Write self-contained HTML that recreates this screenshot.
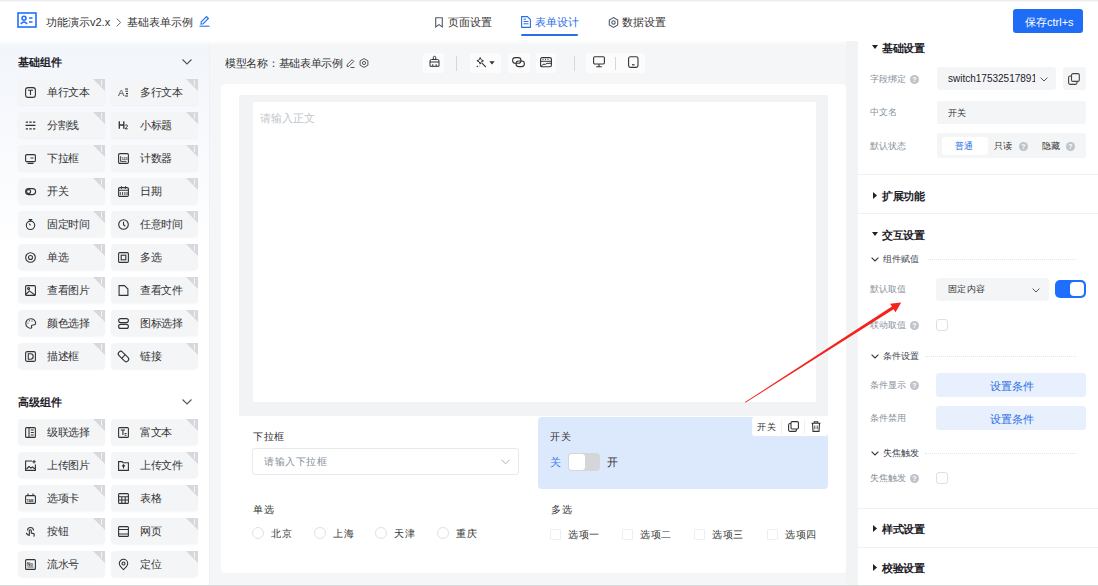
<!DOCTYPE html>
<html><head><meta charset="utf-8">
<style>
*{box-sizing:border-box;margin:0;padding:0}
html,body{width:1098px;height:586px;overflow:hidden;background:#fff;font-family:"Liberation Sans",sans-serif;color:#1d2129}
.a{position:absolute}
.t{position:absolute;white-space:nowrap;line-height:1}
svg{position:absolute;overflow:visible}
/* header */
#top{left:0;top:0;width:1098px;height:2px;background:linear-gradient(#ededed 0,#ededed 50%,#f8f8f8 50%)}
#hdr{left:0;top:2px;width:1098px;height:39px;background:#fff}
/* sidebar */
#side{left:0;top:41px;width:210px;height:545px;background:linear-gradient(180deg,#f2f5fb 0%,#f8fafd 20%,#ffffff 38%,#ffffff 100%)}
#sideline{left:209px;top:41px;width:1px;height:545px;background:#eef0f3}
.it{position:absolute;width:87px;height:26px;border-radius:4px;background:#f4f5f7;box-shadow:0 1px 2px rgba(0,0,0,0.04)}
.it .ic{position:absolute;left:7px;top:8px;width:11px;height:11px}
.it .lb{position:absolute;left:29px;top:8px;font-size:11px;letter-spacing:-0.4px;line-height:11px;color:#333;white-space:nowrap}
.it .cn{position:absolute;right:0;top:0;width:0;height:0;border-top:12px solid #d6d8dc;border-left:12px solid transparent}
.it .cn:after{content:"";position:absolute;left:-4px;top:-11px;width:1px;height:6px;background:#fff;opacity:.7}
.gh{position:absolute;left:18px;margin-top:1px;font-size:11px;font-weight:bold;color:#1d2129;line-height:11px}
/* middle */
#mid{left:210px;top:41px;width:648px;height:545px;background:#f5f6f8}
#card{left:221px;top:84px;width:625px;height:489px;background:#fff;border-radius:4px}
/* right */
#right{left:858px;top:41px;width:240px;height:545px;background:#fff}
.lab{position:absolute;left:870px;font-size:9px;color:#86909c;line-height:11px;white-space:nowrap}
.q{position:absolute;width:9px;height:9px;border-radius:50%;background:#bfc3ca;color:#fff;font-size:7px;line-height:9px;text-align:center;font-weight:bold}
.sh{position:absolute;left:882px;font-size:11px;letter-spacing:-0.5px;font-weight:bold;color:#1d2129;line-height:12px;margin-top:1px;white-space:nowrap}
.tri{position:absolute;width:0;height:0}
.inp{position:absolute;background:#f4f5f7;border-radius:3px}
#bottomline{left:0;top:585px;width:1098px;height:1px;background:#d9d9d9}
</style></head><body>
<div id="top" class="a"></div>
<div id="hdr" class="a"></div>
<div id="side" class="a"></div>
<div id="sideline" class="a"></div>
<div id="mid" class="a"></div>
<div id="card" class="a"></div>
<div id="right" class="a"></div>
<div id="bottomline" class="a"></div>
<div class="a" style="left:0;top:41px;width:1098px;height:4px;background:linear-gradient(rgba(255,255,255,0.85),rgba(255,255,255,0))"></div>

<!-- HEADER CONTENT -->
<svg style="left:17px;top:12px" width="20" height="16" viewBox="0 0 20 16"><rect x="1" y="1" width="18" height="14" fill="none" stroke="#1e6fff" stroke-width="1.6"/><circle cx="7" cy="6.2" r="2" fill="none" stroke="#1e6fff" stroke-width="1.5"/><path d="M3.8 12 Q7 8 10.2 12" fill="none" stroke="#1e6fff" stroke-width="1.5"/><path d="M12 6h3.5M12 10h3.5" stroke="#1e6fff" stroke-width="1.5"/></svg>
<div class="t" style="left:46px;top:17px;font-size:11px;color:#333">功能演示v2.x</div>
<svg style="left:116px;top:18px" width="6" height="9" viewBox="0 0 6 9"><path d="M0.8 0.6l3.8 3.9-3.8 3.9" fill="none" stroke="#666" stroke-width="1"/></svg>
<div class="t" style="left:127px;top:17px;font-size:11px;color:#333">基础表单示例</div>
<svg style="left:199px;top:15px" width="11" height="12" viewBox="0 0 11 12"><path d="M2 9 L2.3 6.8 L7.5 1.6 L9.4 3.5 L4.2 8.7 Z" fill="none" stroke="#2a6ee8" stroke-width="1.1"/><path d="M0.5 11.2h10" stroke="#2a6ee8" stroke-width="1.1"/></svg>

<svg style="left:435px;top:17px" width="8" height="11" viewBox="0 0 8 11"><path d="M0.7 0.7h6.6v9.3L4 7.6 0.7 10z" fill="none" stroke="#4e5969" stroke-width="1.1"/></svg>
<div class="t" style="left:448px;top:17px;font-size:11px;color:#333">页面设置</div>
<svg style="left:521px;top:16px" width="10" height="12" viewBox="0 0 10 12"><path d="M0.6 0.6h5.8l3 3v7.8H0.6z" fill="none" stroke="#2a6ee8" stroke-width="1.1"/><path d="M2.5 5.5h5M2.5 7.8h5M2.5 3.2h2.5" stroke="#2a6ee8" stroke-width="1"/></svg>
<div class="t" style="left:535px;top:17px;font-size:11px;color:#2a6ee8">表单设计</div>
<div class="a" style="left:521px;top:34px;width:57px;height:2px;background:#2a6ee8;border-radius:1px"></div>
<svg style="left:608px;top:17px" width="11" height="11" viewBox="0 0 11 11"><path d="M5.5 0.6 L9.7 3 V8 L5.5 10.4 L1.3 8 V3 Z" fill="none" stroke="#4e5969" stroke-width="1.1"/><circle cx="5.5" cy="5.5" r="1.7" fill="none" stroke="#4e5969" stroke-width="1.1"/></svg>
<div class="t" style="left:622px;top:17px;font-size:11px;color:#333">数据设置</div>

<div class="a" style="left:1013px;top:9px;width:70px;height:24px;background:#1f6cf7;border-radius:3px"></div>
<div class="t" style="left:1025px;top:17px;font-size:11px;color:#fff">保存ctrl+s</div>

<!-- MID -->
<div class="t" style="left:225px;top:58px;font-size:11px;letter-spacing:-0.3px;color:#333">模型名称：基础表单示例</div>
<svg style="left:346px;top:58px" width="9" height="10" viewBox="0 0 9 10"><path d="M1 8.5l0.3-2 4.8-4.8 1.7 1.7-4.8 4.8z" fill="none" stroke="#444" stroke-width="0.9"/><path d="M4.5 9.5h4" stroke="#444" stroke-width="0.9"/></svg>
<svg style="left:359px;top:58px" width="10" height="10" viewBox="0 0 10 10"><path d="M5 0.6L8.9 2.8v4.4L5 9.4 1.1 7.2V2.8z" fill="none" stroke="#444" stroke-width="0.9"/><circle cx="5" cy="5" r="1.6" fill="none" stroke="#444" stroke-width="0.9"/></svg>
<div class="a" style="left:423px;top:53px;width:21px;height:20px;background:#fcfcfd;border-radius:3px"></div>
<div class="a" style="left:470px;top:53px;width:31px;height:20px;background:#fcfcfd;border-radius:3px"></div>
<div class="a" style="left:508px;top:53px;width:22px;height:20px;background:#fcfcfd;border-radius:3px"></div>
<div class="a" style="left:536px;top:53px;width:20px;height:20px;background:#fcfcfd;border-radius:3px"></div>
<div class="a" style="left:586px;top:53px;width:59px;height:20px;background:#fcfcfd;border-radius:3px"></div>
<div class="a" style="left:456px;top:56px;width:1px;height:15px;background:#d5d7db"></div>
<div class="a" style="left:574px;top:56px;width:1px;height:15px;background:#d5d7db"></div>
<div class="a" style="left:615px;top:57px;width:1px;height:13px;background:#d5d7db"></div>
<svg style="left:429px;top:56px" width="11" height="11" viewBox="0 0 11 11"><path d="M4.3 3.3V1.5a1.2 1.2 0 0 1 2.4 0v1.8" fill="none" stroke="#333" stroke-width="1"/><path d="M2.5 3.5h6a1.5 1.5 0 0 1 1.5 1.5v5.3H1V5a1.5 1.5 0 0 1 1.5-1.5zM1 6h9M3.8 10.3V8.2M7.2 10.3V8.2" fill="none" stroke="#333" stroke-width="1"/></svg>
<svg style="left:476px;top:57px" width="11" height="11" viewBox="0 0 11 11"><path d="M4.2 0.5l1 2.3 2.3 1-2.3 1-1 2.3-1-2.3-2.3-1 2.3-1z" fill="none" stroke="#333" stroke-width="1"/><path d="M5.8 5.8l4 4.3" stroke="#333" stroke-width="1.1"/><circle cx="1.3" cy="9.5" r="0.7" fill="#333"/><circle cx="3.8" cy="9" r="0.4" fill="#333"/></svg>
<svg style="left:489px;top:61px" width="6" height="4" viewBox="0 0 6 4"><path d="M0.3 0.3h5.4L3 3.5z" fill="#333"/></svg>
<svg style="left:512px;top:57px" width="14" height="11" viewBox="0 0 14 11"><rect x="0.6" y="0.6" width="8.4" height="5.6" rx="2.8" fill="none" stroke="#333" stroke-width="1.1"/><rect x="4" y="4" width="8.4" height="5.6" rx="2.8" fill="none" stroke="#333" stroke-width="1.1"/></svg>
<svg style="left:540px;top:57px" width="12" height="11" viewBox="0 0 12 11"><rect x="0.6" y="0.6" width="10.8" height="9.2" rx="1.5" fill="none" stroke="#333" stroke-width="1.1"/><path d="M0.6 4.3h10.8" stroke="#333" stroke-width="1"/><path d="M2.5 2.4h1M5 2.4h1M7.5 2.4h1" stroke="#333" stroke-width="1"/><path d="M0.8 9.8L3 7.3h2.5l1.5-1h4.4" fill="none" stroke="#333" stroke-width="1"/></svg>
<svg style="left:593px;top:56px" width="12" height="12" viewBox="0 0 12 12"><rect x="0.6" y="0.8" width="10.8" height="7.2" rx="1.2" fill="none" stroke="#333" stroke-width="1.1"/><path d="M6 8v2.6M3.2 10.8h5.6" fill="none" stroke="#333" stroke-width="1.1"/></svg>
<svg style="left:628px;top:56px" width="11" height="12" viewBox="0 0 11 12"><rect x="0.6" y="0.8" width="9.4" height="10.6" rx="1.8" fill="none" stroke="#333" stroke-width="1.1"/><path d="M4 8.8h2.6" stroke="#333" stroke-width="1.2"/></svg>
<div class="a" style="left:239px;top:95px;width:589px;height:321px;background:#f2f3f5"></div>
<div class="a" style="left:253px;top:102px;width:563px;height:300px;background:#fff"></div>
<div class="t" style="left:260px;top:113px;font-size:11px;color:#c2c6cd">请输入正文</div>
<div class="t" style="left:253px;top:432px;font-size:10px;letter-spacing:0.5px;color:#333">下拉框</div>
<div class="a" style="left:252px;top:448px;width:267px;height:27px;background:#fff;border:1px solid #e9eaee;border-radius:3px"></div>
<div class="t" style="left:264px;top:457px;font-size:10px;letter-spacing:0.5px;color:#86909c">请输入下拉框</div>
<svg style="left:501px;top:459px" width="9" height="6" viewBox="0 0 9 6"><path d="M0.5 0.8l4 4 4-4" fill="none" stroke="#a9aeb8" stroke-width="1"/></svg>
<div class="a" style="left:538px;top:417px;width:290px;height:72px;background:#dce8fc;border-radius:4px"></div>
<div class="t" style="left:550px;top:432px;font-size:10px;letter-spacing:0.5px;color:#333">开关</div>
<div class="t" style="left:550px;top:457px;font-size:11px;color:#3c7ff0">关</div>
<div class="a" style="left:568px;top:453px;width:32px;height:18px;background:#d5d6d9;border-radius:4px"></div>
<div class="a" style="left:569px;top:454px;width:16px;height:16px;background:#fff;border-radius:3px"></div>
<div class="t" style="left:607px;top:457px;font-size:11px;color:#333">开</div>
<div class="a" style="left:752px;top:417px;width:76px;height:19px;background:#fff;border-radius:3px"></div>
<div class="t" style="left:757px;top:423px;font-size:9px;letter-spacing:1px;color:#333">开关</div>
<div class="a" style="left:781px;top:419px;width:1px;height:15px;background:#f0f1f3"></div>
<div class="a" style="left:804px;top:419px;width:1px;height:15px;background:#f0f1f3"></div>
<svg style="left:788px;top:421px" width="11" height="11" viewBox="0 0 11 11"><rect x="3" y="0.6" width="7.4" height="7.4" rx="1.2" fill="none" stroke="#333" stroke-width="1.1"/><path d="M3 2.5H2A1.4 1.4 0 0 0 0.6 3.9v5A1.4 1.4 0 0 0 2 10.4h5A1.4 1.4 0 0 0 8.4 9V8" fill="none" stroke="#333" stroke-width="1.1"/></svg>
<svg style="left:811px;top:421px" width="10" height="11" viewBox="0 0 10 11"><path d="M0.5 2.3h9M3.3 2.3V0.8h3.4v1.5M1.5 2.3l0.5 8.1h6l0.5-8.1" fill="none" stroke="#333" stroke-width="1.1"/><path d="M3.8 4.6v3.6M6.2 4.6v3.6" stroke="#333" stroke-width="0.9"/></svg>
<div class="t" style="left:253px;top:505px;font-size:10px;letter-spacing:0.5px;color:#333">单选</div>
<div class="a" style="left:252px;top:527px;width:12px;height:12px;border:1px solid #dfe1e5;border-radius:50%;background:#fff"></div>
<div class="t" style="left:271px;top:529px;font-size:10px;letter-spacing:0.5px;color:#333">北京</div>
<div class="a" style="left:314px;top:527px;width:12px;height:12px;border:1px solid #dfe1e5;border-radius:50%;background:#fff"></div>
<div class="t" style="left:333px;top:529px;font-size:10px;letter-spacing:0.5px;color:#333">上海</div>
<div class="a" style="left:375px;top:527px;width:12px;height:12px;border:1px solid #dfe1e5;border-radius:50%;background:#fff"></div>
<div class="t" style="left:394px;top:529px;font-size:10px;letter-spacing:0.5px;color:#333">天津</div>
<div class="a" style="left:437px;top:527px;width:12px;height:12px;border:1px solid #dfe1e5;border-radius:50%;background:#fff"></div>
<div class="t" style="left:456px;top:529px;font-size:10px;letter-spacing:0.5px;color:#333">重庆</div>
<div class="t" style="left:551px;top:505px;font-size:10px;letter-spacing:0.5px;color:#333">多选</div>
<div class="a" style="left:550px;top:529px;width:11px;height:11px;border:1px solid #eceef1;border-radius:1px;background:#fff"></div>
<div class="t" style="left:568px;top:530px;font-size:10px;letter-spacing:0.5px;color:#333">选项一</div>
<div class="a" style="left:622px;top:529px;width:11px;height:11px;border:1px solid #eceef1;border-radius:1px;background:#fff"></div>
<div class="t" style="left:640px;top:530px;font-size:10px;letter-spacing:0.5px;color:#333">选项二</div>
<div class="a" style="left:694px;top:529px;width:11px;height:11px;border:1px solid #eceef1;border-radius:1px;background:#fff"></div>
<div class="t" style="left:712px;top:530px;font-size:10px;letter-spacing:0.5px;color:#333">选项三</div>
<div class="a" style="left:767px;top:529px;width:11px;height:11px;border:1px solid #eceef1;border-radius:1px;background:#fff"></div>
<div class="t" style="left:785px;top:530px;font-size:10px;letter-spacing:0.5px;color:#333">选项四</div>
<!-- /MID -->

<!-- RIGHT -->
<div class="a" style="left:846px;top:41px;width:12px;height:544px;background:#f2f3f5"></div>
<svg style="left:872px;top:45px" width="6" height="4" viewBox="0 0 6 4"><path d="M0 0h6L3 4z" fill="#1d2129"/></svg><div class="sh" style="top:41px">基础设置</div>
<div class="lab" style="left:870px;top:74px">字段绑定</div><div class="q" style="left:910px;top:75px">?</div>
<div class="inp" style="left:937px;top:67px;width:119px;height:23px"></div>
<div class="t" style="left:948px;top:74px;font-size:10px;color:#1d2129;width:87px;overflow:hidden">switch17532517891<span style="opacity:.4">0</span></div>
<svg style="left:1040px;top:77px" width="8" height="5" viewBox="0 0 8 5"><path d="M0.6 0.6L4 4l3.4-3.4" fill="none" stroke="#555" stroke-width="1"/></svg>
<div class="inp" style="left:1063px;top:67px;width:23px;height:23px"></div>
<svg style="left:1068px;top:73px" width="12" height="12" viewBox="0 0 12 12"><rect x="3.5" y="0.6" width="7.8" height="7.8" rx="1.5" fill="none" stroke="#444" stroke-width="1.1"/><path d="M3.5 3H2.2A1.6 1.6 0 0 0 0.6 4.6v5.2a1.6 1.6 0 0 0 1.6 1.6h5.2a1.6 1.6 0 0 0 1.6-1.6V8.4" fill="none" stroke="#444" stroke-width="1.1"/></svg>
<div class="lab" style="left:870px;top:107px">中文名</div>
<div class="inp" style="left:937px;top:101px;width:149px;height:23px"></div>
<div class="t" style="left:948px;top:109px;font-size:9px;color:#333">开关</div>
<div class="lab" style="left:870px;top:141px">默认状态</div>
<div class="inp" style="left:937px;top:133px;width:149px;height:25px"></div>
<div class="a" style="left:942px;top:137px;width:46px;height:18px;background:#fff;border-radius:3px"></div>
<div class="t" style="left:955px;top:142px;font-size:9px;color:#2a6ee8">普通</div>
<div class="t" style="left:994px;top:142px;font-size:9px;color:#333">只读</div><div class="q" style="left:1019px;top:142px">?</div>
<div class="t" style="left:1042px;top:142px;font-size:9px;color:#333">隐藏</div><div class="q" style="left:1066px;top:142px">?</div>
<div class="a" style="left:858px;top:174px;width:240px;height:1px;background:#eff0f2"></div>
<svg style="left:873px;top:192px" width="4" height="7" viewBox="0 0 4 7"><path d="M0 0v7L4 3.5z" fill="#1d2129"/></svg><div class="sh" style="top:189px">扩展功能</div>
<div class="a" style="left:858px;top:213px;width:240px;height:1px;background:#eff0f2"></div>
<svg style="left:872px;top:232px" width="6" height="4" viewBox="0 0 6 4"><path d="M0 0h6L3 4z" fill="#1d2129"/></svg><div class="sh" style="top:228px">交互设置</div>
<svg style="left:871px;top:257px" width="8" height="5" viewBox="0 0 8 5"><path d="M0.6 0.6L4 4l3.4-3.4" fill="none" stroke="#333" stroke-width="1.1"/></svg><div class="t" style="left:883px;top:255px;font-size:9px;color:#3d4450">组件赋值</div><div class="a" style="left:928px;top:259px;width:149px;height:0;border-top:1px dotted #e3e5e8"></div>
<div class="lab" style="left:870px;top:284px">默认取值</div>
<div class="inp" style="left:936px;top:278px;width:113px;height:23px"></div>
<div class="t" style="left:948px;top:285px;font-size:9px;letter-spacing:0.4px;color:#333">固定内容</div>
<svg style="left:1032px;top:288px" width="8" height="5" viewBox="0 0 8 5"><path d="M0.6 0.6L4 4l3.4-3.4" fill="none" stroke="#555" stroke-width="1"/></svg>
<div class="a" style="left:1055px;top:280px;width:31px;height:18px;background:#1e6fff;border-radius:5px"></div>
<div class="a" style="left:1070px;top:282px;width:14px;height:14px;background:#fff;border-radius:4px"></div>
<div class="lab" style="left:870px;top:320px">联动取值</div><div class="q" style="left:910px;top:321px">?</div>
<div class="a" style="left:936px;top:319px;width:12px;height:12px;border:1px solid #dcdfe4;border-radius:3px;background:#fff"></div>
<svg style="left:871px;top:354px" width="8" height="5" viewBox="0 0 8 5"><path d="M0.6 0.6L4 4l3.4-3.4" fill="none" stroke="#333" stroke-width="1.1"/></svg><div class="t" style="left:883px;top:352px;font-size:9px;color:#3d4450">条件设置</div><div class="a" style="left:925px;top:356px;width:151px;height:0;border-top:1px dotted #e3e5e8"></div>
<div class="lab" style="left:870px;top:380px">条件显示</div><div class="q" style="left:910px;top:381px">?</div>
<div class="a" style="left:936px;top:373px;width:150px;height:24px;background:#e8f0fd;border-radius:3px"></div>
<div class="t" style="left:990px;top:381px;font-size:11px;color:#2a6ee8">设置条件</div>
<div class="lab" style="left:870px;top:413px">条件禁用</div>
<div class="a" style="left:936px;top:406px;width:150px;height:24px;background:#e8f0fd;border-radius:3px"></div>
<div class="t" style="left:990px;top:414px;font-size:11px;color:#2a6ee8">设置条件</div>
<svg style="left:871px;top:451px" width="8" height="5" viewBox="0 0 8 5"><path d="M0.6 0.6L4 4l3.4-3.4" fill="none" stroke="#333" stroke-width="1.1"/></svg><div class="t" style="left:883px;top:449px;font-size:9px;color:#3d4450">失焦触发</div><div class="a" style="left:925px;top:453px;width:152px;height:0;border-top:1px dotted #e3e5e8"></div>
<div class="lab" style="left:870px;top:473px">失焦触发</div><div class="q" style="left:910px;top:474px">?</div>
<div class="a" style="left:936px;top:472px;width:12px;height:12px;border:1px solid #dcdfe4;border-radius:3px;background:#fff"></div>
<div class="a" style="left:858px;top:508px;width:240px;height:1px;background:#eff0f2"></div>
<svg style="left:873px;top:525px" width="4" height="7" viewBox="0 0 4 7"><path d="M0 0v7L4 3.5z" fill="#1d2129"/></svg><div class="sh" style="top:522px">样式设置</div>
<div class="a" style="left:858px;top:547px;width:240px;height:1px;background:#eff0f2"></div>
<svg style="left:873px;top:564px" width="4" height="7" viewBox="0 0 4 7"><path d="M0 0v7L4 3.5z" fill="#1d2129"/></svg><div class="sh" style="top:561px">校验设置</div>
<!-- /RIGHT -->

<!-- SIDEBAR -->
<div class="gh" style="top:56px">基础组件</div>
<svg style="left:182px;top:59px" width="10" height="6" viewBox="0 0 10 6"><path d="M0.5 0.5l4.5 4.5 4.5-4.5" fill="none" stroke="#555" stroke-width="1.1"/></svg>
<div class="it" style="left:18px;top:79px"><svg class="ic" viewBox="0 0 11 11"><rect x="0.6" y="0.6" width="9.8" height="9.8" rx="2.5" stroke="#333" stroke-width="1.1" fill="none"/><path d="M3 3.3h5M5.5 3.3v4.6" stroke="#333" stroke-width="1.1" fill="none"/></svg><div class="lb">单行文本</div><div class="cn"></div></div>
<div class="it" style="left:111px;top:79px"><svg class="ic" viewBox="0 0 11 11"><text x="0" y="9" font-size="9.5" font-family="Liberation Sans" fill="#333">A</text><path d="M7 2h3M7.5 4.3h2.5M8 6.6h2M7 9h3" stroke="#333" stroke-width="1.1"/></svg><div class="lb">多行文本</div><div class="cn"></div></div>
<div class="it" style="left:18px;top:112px"><svg class="ic" viewBox="0 0 11 11"><path d="M0.8 2.2h2.2M4.3 2.2h2.4M8 2.2h2.3M0.5 5.4h10M0.8 8.8h2.2M4.3 8.8h2.4M8 8.8h2.3" stroke="#333" stroke-width="1.2"/></svg><div class="lb">分割线</div><div class="cn"></div></div>
<div class="it" style="left:111px;top:112px"><svg class="ic" viewBox="0 0 11 11"><path d="M1.3 1.3v7.5M5.8 1.3v7.5M1.3 5h4.5" stroke="#333" stroke-width="1.3" fill="none"/><path d="M7 5.6a1.3 1.3 0 0 1 2.5 0.4c0 0.9-2.5 2.2-2.5 2.8h2.7" stroke="#333" stroke-width="1" fill="none"/></svg><div class="lb">小标题</div><div class="cn"></div></div>
<div class="it" style="left:18px;top:145px"><svg class="ic" viewBox="0 0 11 11"><rect x="0.6" y="1.6" width="9.8" height="7" rx="1.2" stroke="#333" stroke-width="1.1" fill="none"/><path d="M2.5 10.4h6M5.5 5h3" stroke="#333" stroke-width="1.1" fill="none"/></svg><div class="lb">下拉框</div><div class="cn"></div></div>
<div class="it" style="left:111px;top:145px"><svg class="ic" viewBox="0 0 11 11"><rect x="0.6" y="0.6" width="9.8" height="9.8" rx="1.2" stroke="#333" stroke-width="1.1" fill="none"/><path d="M2.6 3.2v5.2h5.8" stroke="#333" stroke-width="0.9" fill="none"/><text x="3.4" y="7" font-size="3.8" font-weight="bold" font-family="Liberation Sans" fill="#333">123</text></svg><div class="lb">计数器</div><div class="cn"></div></div>
<div class="it" style="left:18px;top:178px"><svg class="ic" viewBox="0 0 11 11"><rect x="0.6" y="2.6" width="10" height="6" rx="3" stroke="#333" stroke-width="1.1" fill="none"/><circle cx="3.6" cy="5.6" r="2" stroke="#333" stroke-width="1.1" fill="none"/></svg><div class="lb">开关</div><div class="cn"></div></div>
<div class="it" style="left:111px;top:178px"><svg class="ic" viewBox="0 0 11 11"><rect x="0.6" y="1.6" width="9.8" height="8.8" rx="1.2" stroke="#333" stroke-width="1.1" fill="none"/><path d="M3.5 0.2v2.5M7.5 0.2v2.5M0.6 4.3h9.8" stroke="#333" stroke-width="1.1" fill="none"/><path d="M2.3 6v3M4.6 6v3M6.9 6v3M9 6v3" stroke="#333" stroke-width="0.9"/></svg><div class="lb">日期</div><div class="cn"></div></div>
<div class="it" style="left:18px;top:211px"><svg class="ic" viewBox="0 0 11 11"><circle cx="5.5" cy="6.3" r="4.2" stroke="#333" stroke-width="1.1" fill="none"/><path d="M3.8 0.6h3.4M5.5 0.6v1.5M5.5 6.3l-1.4-1.8" stroke="#333" stroke-width="1.1" fill="none"/></svg><div class="lb">固定时间</div><div class="cn"></div></div>
<div class="it" style="left:111px;top:211px"><svg class="ic" viewBox="0 0 11 11"><circle cx="5.5" cy="5.5" r="4.8" stroke="#333" stroke-width="1.1" fill="none"/><path d="M5.5 2.8v2.9l1.8 1.6" stroke="#333" stroke-width="1.1" fill="none"/></svg><div class="lb">任意时间</div><div class="cn"></div></div>
<div class="it" style="left:18px;top:244px"><svg class="ic" viewBox="0 0 11 11"><circle cx="5.5" cy="5.5" r="4.8" stroke="#333" stroke-width="1.1" fill="none"/><circle cx="5.5" cy="5.5" r="2" stroke="#333" stroke-width="1.1" fill="none"/></svg><div class="lb">单选</div><div class="cn"></div></div>
<div class="it" style="left:111px;top:244px"><svg class="ic" viewBox="0 0 11 11"><rect x="0.6" y="0.6" width="9.8" height="9.8" rx="1.2" stroke="#333" stroke-width="1.1" fill="none"/><rect x="3.2" y="3.2" width="4.6" height="4.6" stroke="#333" stroke-width="1.1" fill="none"/></svg><div class="lb">多选</div><div class="cn"></div></div>
<div class="it" style="left:18px;top:277px"><svg class="ic" viewBox="0 0 11 11"><rect x="0.6" y="0.6" width="9.8" height="9.8" rx="1" stroke="#333" stroke-width="1.1" fill="none"/><circle cx="3.6" cy="3.6" r="1" stroke="#333" stroke-width="1.1" fill="none"/><path d="M0.8 9.5l3.6-3.6 5.8 4.3" stroke="#333" stroke-width="1.1" fill="none"/></svg><div class="lb">查看图片</div><div class="cn"></div></div>
<div class="it" style="left:111px;top:277px"><svg class="ic" viewBox="0 0 11 11"><path d="M1.1 0.6h5.4l3.4 3.4v6.4H1.1z" stroke="#333" stroke-width="1.1" fill="none"/></svg><div class="lb">查看文件</div><div class="cn"></div></div>
<div class="it" style="left:18px;top:310px"><svg class="ic" viewBox="0 0 11 11"><path d="M5.5 0.7a4.8 4.8 0 1 0 0.2 9.6c1 0 1.3-0.8 0.9-1.5-0.5-0.9 0.1-1.8 1.2-1.8h1.1a1.9 1.9 0 0 0 1.8-1.9A4.8 4.8 0 0 0 5.5 0.7z" stroke="#333" stroke-width="1.1" fill="none"/><circle cx="3" cy="5" r="0.6" fill="#333"/><circle cx="4.5" cy="2.8" r="0.6" fill="#333"/><circle cx="7" cy="3" r="0.6" fill="#333"/></svg><div class="lb">颜色选择</div><div class="cn"></div></div>
<div class="it" style="left:111px;top:310px"><svg class="ic" viewBox="0 0 11 11"><rect x="0.6" y="0.6" width="9.8" height="4" rx="2" stroke="#333" stroke-width="1.1" fill="none"/><rect x="0.6" y="6.4" width="9.8" height="4" rx="2" stroke="#333" stroke-width="1.1" fill="none"/></svg><div class="lb">图标选择</div><div class="cn"></div></div>
<div class="it" style="left:18px;top:343px"><svg class="ic" viewBox="0 0 11 11"><rect x="0.6" y="0.6" width="9.8" height="9.8" rx="1.5" stroke="#333" stroke-width="1.1" fill="none"/><path d="M3.3 2.8h2.2a2.7 2.7 0 0 1 0 5.4H3.3z" stroke="#333" stroke-width="1.1" fill="none"/></svg><div class="lb">描述框</div><div class="cn"></div></div>
<div class="it" style="left:111px;top:343px"><svg class="ic" viewBox="0 0 11 11"><g transform="rotate(45 5.5 5.5)"><rect x="-0.8" y="3" width="12.6" height="5" rx="2.5" stroke="#333" stroke-width="1.1" fill="none"/><path d="M5.5 3v5" stroke="#333" stroke-width="1.1" fill="none"/></g></svg><div class="lb">链接</div><div class="cn"></div></div>
<div class="gh" style="top:396px">高级组件</div>
<svg style="left:182px;top:399px" width="10" height="6" viewBox="0 0 10 6"><path d="M0.5 0.5l4.5 4.5 4.5-4.5" fill="none" stroke="#555" stroke-width="1.1"/></svg>
<div class="it" style="left:18px;top:419px"><svg class="ic" viewBox="0 0 11 11"><rect x="0.6" y="0.6" width="9.8" height="9.8" rx="1" stroke="#333" stroke-width="1.1" fill="none"/><path d="M4 0.6v9.8M5.8 3h3M5.8 5.5h3M5.8 8h3" stroke="#333" stroke-width="1.1" fill="none"/></svg><div class="lb">级联选择</div><div class="cn"></div></div>
<div class="it" style="left:111px;top:419px"><svg class="ic" viewBox="0 0 11 11"><rect x="0.6" y="0.6" width="9.8" height="9.8" rx="1" stroke="#333" stroke-width="1.1" fill="none"/><path d="M2.8 3h4.2M4.9 3v5M6.5 6.5h2M6.5 8.2h2" stroke="#333" stroke-width="1.1" fill="none"/></svg><div class="lb">富文本</div><div class="cn"></div></div>
<div class="it" style="left:18px;top:452px"><svg class="ic" viewBox="0 0 11 11"><path d="M7 1H0.6v9.4h9.8V4.5" stroke="#333" stroke-width="1.1" fill="none"/><path d="M1.5 9l2.5-2.5 2 1.5 1.5-1 2.5 2" stroke="#333" stroke-width="1.1" fill="none"/><path d="M9 0v3.5M7.2 1.8h3.6" stroke="#333" stroke-width="1.1" fill="none"/></svg><div class="lb">上传图片</div><div class="cn"></div></div>
<div class="it" style="left:111px;top:452px"><svg class="ic" viewBox="0 0 11 11"><path d="M0.6 1.6h3.5l1 1.2h5.3v7.6H0.6z" stroke="#333" stroke-width="1.1" fill="none"/><path d="M5.5 8.5V5M4 6.4l1.5-1.5L7 6.4" stroke="#333" stroke-width="1.1" fill="none"/></svg><div class="lb">上传文件</div><div class="cn"></div></div>
<div class="it" style="left:18px;top:485px"><svg class="ic" viewBox="0 0 11 11"><rect x="0.6" y="2.6" width="9.8" height="7.8" rx="1" stroke="#333" stroke-width="1.1" fill="none"/><path d="M3 0.6v2M8 0.6v2" stroke="#333" stroke-width="1.1" fill="none"/><text x="1.5" y="8.5" font-size="3.5" font-weight="bold" font-family="Liberation Sans" fill="#333">TAB</text></svg><div class="lb">选项卡</div><div class="cn"></div></div>
<div class="it" style="left:111px;top:485px"><svg class="ic" viewBox="0 0 11 11"><rect x="0.6" y="0.6" width="9.8" height="9.8" rx="1" stroke="#333" stroke-width="1.1" fill="none"/><path d="M0.6 3.8h9.8M0.6 7h9.8M3.8 3.8v6.6M7.2 3.8v6.6" stroke="#333" stroke-width="1.1" fill="none"/></svg><div class="lb">表格</div><div class="cn"></div></div>
<div class="it" style="left:18px;top:518px"><svg class="ic" viewBox="0 0 11 11"><path d="M2.5 4.5a3 3 0 1 1 6 0" stroke="#333" stroke-width="1.1" fill="none"/><path d="M4.3 9.8V4.8a1 1 0 0 1 2 0v2.2l2.3 0.6a1 1 0 0 1 0.7 1.2l-0.5 1.8" stroke="#333" stroke-width="1.1" fill="none"/><path d="M1.5 6.8c0 1.5 1 2.3 2.8 2.5" stroke="#333" stroke-width="1.1" fill="none"/></svg><div class="lb">按钮</div><div class="cn"></div></div>
<div class="it" style="left:111px;top:518px"><svg class="ic" viewBox="0 0 11 11"><rect x="0.6" y="0.6" width="9.8" height="9.8" rx="1" stroke="#333" stroke-width="1.1" fill="none"/><path d="M0.6 3.5h9.8M0.6 8h9.8" stroke="#333" stroke-width="1.1" fill="none"/></svg><div class="lb">网页</div><div class="cn"></div></div>
<div class="it" style="left:18px;top:551px"><svg class="ic" viewBox="0 0 11 11"><rect x="0.6" y="0.6" width="9.8" height="9.8" rx="1" stroke="#333" stroke-width="1.1" fill="none"/><text x="2" y="6.5" font-size="4.5" font-weight="bold" font-family="Liberation Sans" fill="#333">No</text><path d="M2.5 8h6" stroke="#333" stroke-width="0.8"/></svg><div class="lb">流水号</div><div class="cn"></div></div>
<div class="it" style="left:111px;top:551px"><svg class="ic" viewBox="0 0 11 11"><path d="M5.5 10.6S1.3 6.8 1.3 4.5a4.2 4.2 0 0 1 8.4 0c0 2.3-4.2 6.1-4.2 6.1z" stroke="#333" stroke-width="1.1" fill="none"/><circle cx="5.5" cy="4.5" r="1.5" stroke="#333" stroke-width="1.1" fill="none"/></svg><div class="lb">定位</div><div class="cn"></div></div>
<!-- /SIDEBAR -->

<!-- ARROW -->
<svg style="left:0;top:0" width="1098" height="586" viewBox="0 0 1098 586"><polygon points="745.4,402.7 893.6,309.3 895.5,312.2 901.2,302.6 890.1,303.8 891.9,306.6 745.0,402.1" fill="#f5231c"/></svg>
<!-- /ARROW -->
</body></html>
